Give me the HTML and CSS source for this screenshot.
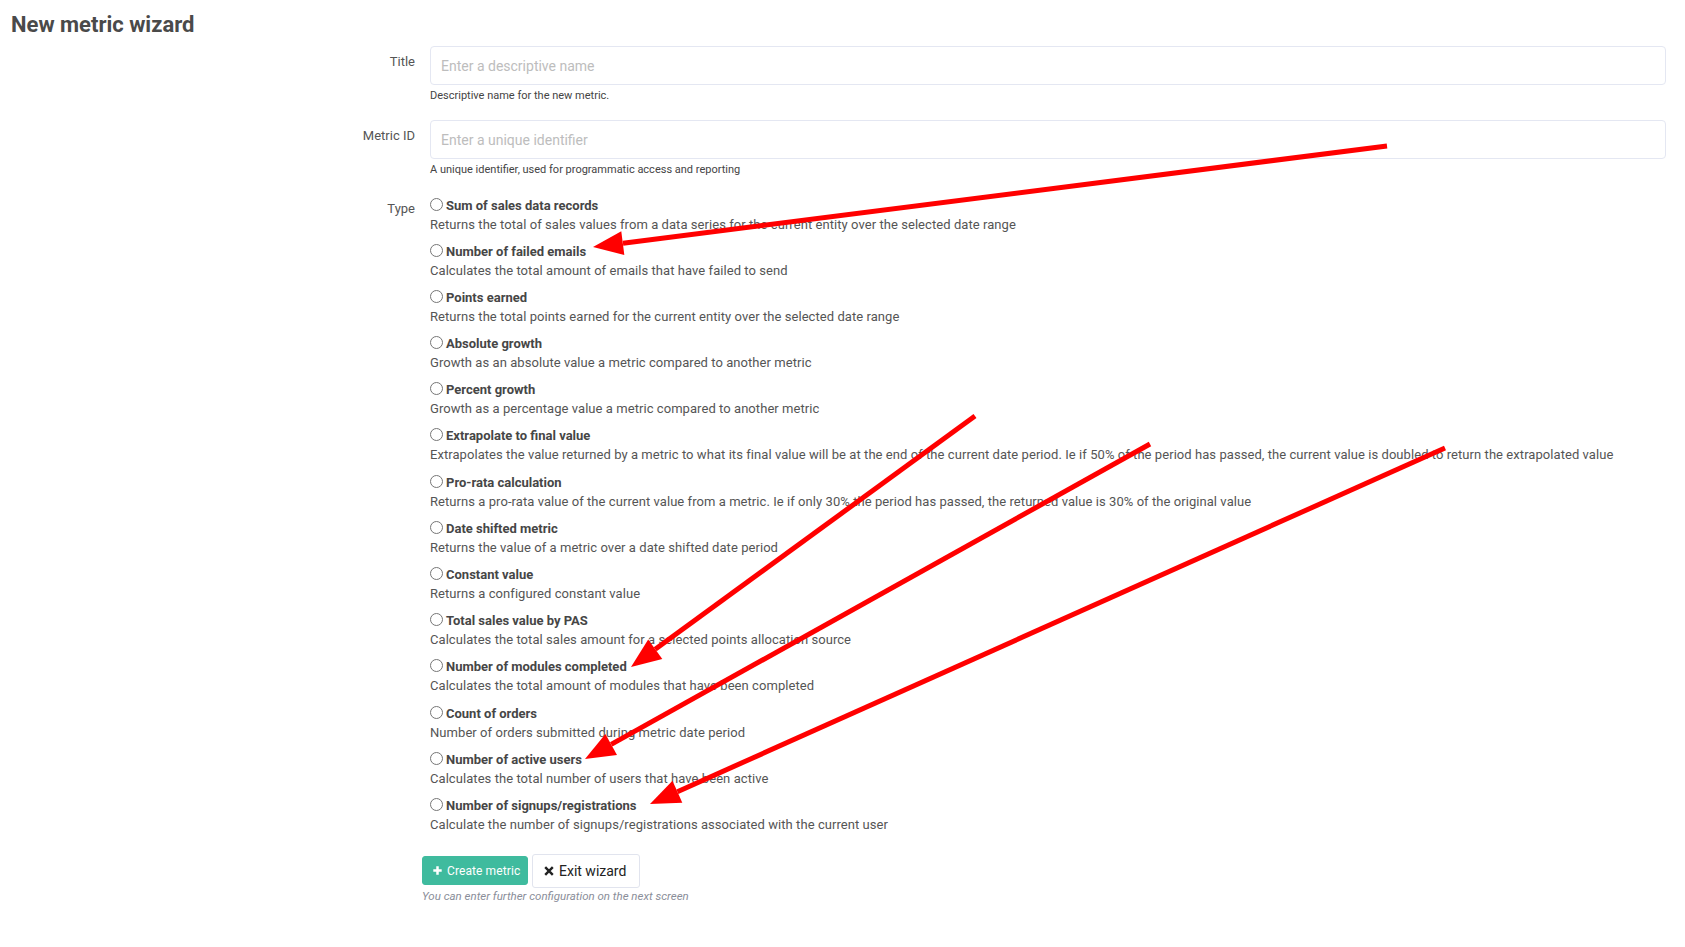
FILE: index.html
```html
<!DOCTYPE html>
<html lang="en">
<head>
<meta charset="utf-8">
<title>New metric wizard</title>
<link rel="stylesheet" href="styles.css">
</head>
<body>
<div class="page">
  <h1 class="page-title">New metric wizard</h1>
  <form class="form">
    <div class="form-row">
      <label class="form-label" for="title">Title</label>
      <div class="form-field">
        <input class="text-input" id="title" type="text" placeholder="Enter a descriptive name">
        <div class="help">Descriptive name for the new metric.</div>
      </div>
    </div>
    <div class="form-row">
      <label class="form-label" for="metric-id">Metric ID</label>
      <div class="form-field">
        <input class="text-input" id="metric-id" type="text" placeholder="Enter a unique identifier">
        <div class="help">A unique identifier, used for programmatic access and reporting</div>
      </div>
    </div>
    <div class="form-row">
      <div class="form-label form-label-type">Type</div>
      <div class="form-field options">
        <div class="option"><label class="option-title"><input type="radio" name="type">Sum of sales data records</label><div class="option-desc">Returns the total of sales values from a data series for the current entity over the selected date range</div></div>
        <div class="option"><label class="option-title"><input type="radio" name="type">Number of failed emails</label><div class="option-desc">Calculates the total amount of emails that have failed to send</div></div>
        <div class="option"><label class="option-title"><input type="radio" name="type">Points earned</label><div class="option-desc">Returns the total points earned for the current entity over the selected date range</div></div>
        <div class="option"><label class="option-title"><input type="radio" name="type">Absolute growth</label><div class="option-desc">Growth as an absolute value a metric compared to another metric</div></div>
        <div class="option"><label class="option-title"><input type="radio" name="type">Percent growth</label><div class="option-desc">Growth as a percentage value a metric compared to another metric</div></div>
        <div class="option"><label class="option-title"><input type="radio" name="type">Extrapolate to final value</label><div class="option-desc">Extrapolates the value returned by a metric to what its final value will be at the end of the current date period. Ie if 50% of the period has passed, the current value is doubled to return the extrapolated value</div></div>
        <div class="option"><label class="option-title"><input type="radio" name="type">Pro-rata calculation</label><div class="option-desc">Returns a pro-rata value of the current value from a metric. Ie if only 30% the period has passed, the returned value is 30% of the original value</div></div>
        <div class="option"><label class="option-title"><input type="radio" name="type">Date shifted metric</label><div class="option-desc">Returns the value of a metric over a date shifted date period</div></div>
        <div class="option"><label class="option-title"><input type="radio" name="type">Constant value</label><div class="option-desc">Returns a configured constant value</div></div>
        <div class="option"><label class="option-title"><input type="radio" name="type">Total sales value by PAS</label><div class="option-desc">Calculates the total sales amount for a selected points allocation source</div></div>
        <div class="option"><label class="option-title"><input type="radio" name="type">Number of modules completed</label><div class="option-desc">Calculates the total amount of modules that have been completed</div></div>
        <div class="option"><label class="option-title"><input type="radio" name="type">Count of orders</label><div class="option-desc">Number of orders submitted during metric date period</div></div>
        <div class="option"><label class="option-title"><input type="radio" name="type">Number of active users</label><div class="option-desc">Calculates the total number of users that have been active</div></div>
        <div class="option"><label class="option-title"><input type="radio" name="type">Number of signups/registrations</label><div class="option-desc">Calculate the number of signups/registrations associated with the current user</div></div>
      </div>
    </div>
    <div class="form-row form-row-actions">
      <div></div>
      <div class="actions">
        <div class="buttons">
          <button type="button" class="btn btn-primary"><svg class="btn-icon" width="9" height="9" viewBox="0 0 9 9"><path d="M4.5 0.3V8.7M0.3 4.5H8.7" stroke="#fff" stroke-width="2.5"/></svg>Create metric</button>
          <button type="button" class="btn btn-default"><svg class="btn-icon" width="10" height="10" viewBox="0 0 10 10"><path d="M1.2 1.2L8.8 8.8M8.8 1.2L1.2 8.8" stroke="#222" stroke-width="2.4"/></svg>Exit wizard</button>
        </div>
        <div class="actions-help">You can enter further configuration on the next screen</div>
      </div>
    </div>
  </form>
  <svg class="annotations" width="1685" height="947" viewBox="0 0 1685 947">
    <g fill="#ff0000" stroke="#ff0000">
      <line x1="1387" y1="146" x2="623" y2="243.2" stroke-width="5"/>
      <polygon points="593,247 621.3,231.3 624.3,255.1" stroke="none"/>
      <line x1="975" y1="416" x2="655.2" y2="649.3" stroke-width="5"/>
      <polygon points="631,667 648.2,639.6 662.3,659" stroke="none"/>
      <line x1="1150" y1="444" x2="611.2" y2="744.4" stroke-width="5"/>
      <polygon points="585,759 605.4,733.9 617,754.9" stroke="none"/>
      <line x1="1445" y1="448" x2="677.4" y2="791.7" stroke-width="5"/>
      <polygon points="650,804 672.5,780.8 682.3,802.7" stroke="none"/>
    </g>
  </svg>
</div>
</body>
</html>
```
FILE: styles.css
```css
html, body {
  margin: 0;
  padding: 0;
  background: #fff;
}

body {
  font-family: Roboto, "Liberation Sans", Arial, sans-serif;
  color: #555;
  font-size: 13px;
}

.page {
  position: relative;
  padding: 11px 19px 0 11px;
  min-height: 936px;
}

.page-title {
  margin: 0;
  font-size: 22px;
  line-height: 28px;
  font-weight: 700;
  color: #4a4a4a;
}

.form {
  margin-top: 7px;
}

.form-row {
  display: grid;
  grid-template-columns: 419px 1fr;
  margin-bottom: 17px;
}

.form-label {
  text-align: right;
  padding-right: 15px;
  padding-top: 5.5px;
  font-size: 13px;
  line-height: 19px;
  color: #555;
}

.form-label-type {
  padding-top: 5px;
}

.text-input {
  display: block;
  width: 100%;
  box-sizing: border-box;
  height: 39px;
  margin: 0;
  padding: 0 10px;
  border: 1px solid #e4e7f2;
  border-radius: 4px;
  font-family: Roboto, "Liberation Sans", Arial, sans-serif;
  font-size: 14px;
  color: #555;
  background: #fff;
  outline: none;
}

.text-input::placeholder {
  color: #bdbdbd;
}

.help {
  margin-top: 4px;
  font-size: 11px;
  line-height: 14px;
  color: #444;
}

.options {
  padding-top: 1.5px;
}

.option {
  margin-bottom: 8.2px;
}

.option:last-child {
  margin-bottom: 0;
}

.option-title {
  display: flex;
  align-items: center;
  font-weight: 700;
  font-size: 13px;
  line-height: 19px;
  color: #464646;
}

.option-title input {
  width: 13px;
  height: 13px;
  margin: 0 3px 2px 0;
}

.option-desc {
  font-size: 13px;
  line-height: 19px;
  letter-spacing: 0.06px;
  color: #555;
}

.form-row-actions {
  margin-top: 20px;
}

.actions {
  margin-left: -8px;
}

.buttons {
  display: flex;
  align-items: center;
  gap: 4px;
}

.btn {
  display: inline-flex;
  align-items: center;
  box-sizing: border-box;
  font-family: Roboto, "Liberation Sans", Arial, sans-serif;
  border-radius: 3px;
  cursor: pointer;
}

.btn-icon {
  margin-right: 5px;
}

.btn-primary {
  height: 29px;
  width: 106px;
  padding: 0 0 0 10px;
  background: #3fbb9e;
  border: 1px solid #3fbb9e;
  color: #fff;
  font-size: 12px;
  letter-spacing: 0.1px;
}

.btn-default {
  height: 34px;
  width: 108px;
  padding: 0 0 0 11px;
  background: #fff;
  border: 1px solid #e1e4ee;
  color: #222;
  font-size: 14px;
}

.actions-help {
  margin-top: 1px;
  font-size: 11.5px;
  line-height: 14px;
  font-style: italic;
  color: #8a8e99;
}

.annotations {
  position: absolute;
  left: 0;
  top: 0;
  pointer-events: none;
}
```
